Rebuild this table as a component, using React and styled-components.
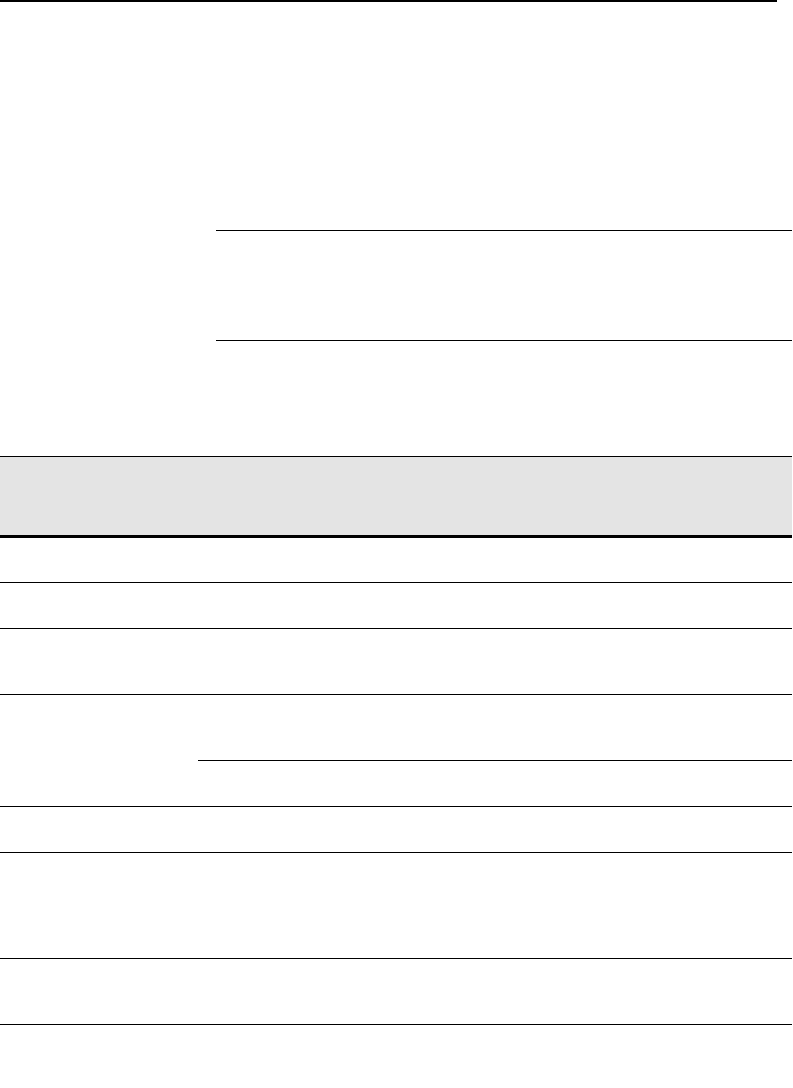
import React from "react";
import styled, { createGlobalStyle } from "styled-components";

const Global = createGlobalStyle`
  html, body { margin: 0; padding: 0; background: #fff; }
  body { font-family: "Liberation Sans", Arial, sans-serif; }
  * { box-sizing: border-box; }
`;

const Page = styled.div`
  width: 793px;
  display: flex;
  flex-direction: column;
`;

const TopRule = styled.div`
  width: 777px;
  height: 2px;
  background: #000;
`;

const Block = styled.section`
  margin-top: 228px;
  margin-left: 216px;
  width: 576px;
  height: 111px;
  border-top: 1px solid #000;
  border-bottom: 1px solid #000;
`;

const Table = styled.div`
  margin-top: 115px;
  width: 792px;
  display: flex;
  flex-direction: column;
`;

const Header = styled.div`
  height: 82px;
  background: #e4e4e4;
  border-top: 1px solid #000;
  border-bottom: 3px solid #000;
`;

const Row = styled.div`
  display: flex;
  height: ${(p) => p.$h}px;
  border-bottom: 1px solid #000;
`;

const LeftCell = styled.div`
  width: 198px;
  flex: none;
`;

const RightCol = styled.div`
  flex: 1;
  display: flex;
  flex-direction: column;
`;

const SubCell = styled.div`
  height: ${(p) => p.$h}px;
  border-bottom: ${(p) => (p.$divider ? "1px solid #000" : "none")};
`;

export default function App() {
  const rows = [45, 46, 66];
  const rowsAfter = [46, 106, 66];
  return (
    <>
      <Global />
      <Page>
        <TopRule />
        <Block />
        <Table>
          <Header />
          {rows.map((h, i) => (
            <Row key={"a" + i} $h={h} />
          ))}
          <Row $h={112}>
            <LeftCell />
            <RightCol>
              <SubCell $h={66} $divider />
              <SubCell $h={45} />
            </RightCol>
          </Row>
          {rowsAfter.map((h, i) => (
            <Row key={"b" + i} $h={h} />
          ))}
        </Table>
      </Page>
    </>
  );
}
